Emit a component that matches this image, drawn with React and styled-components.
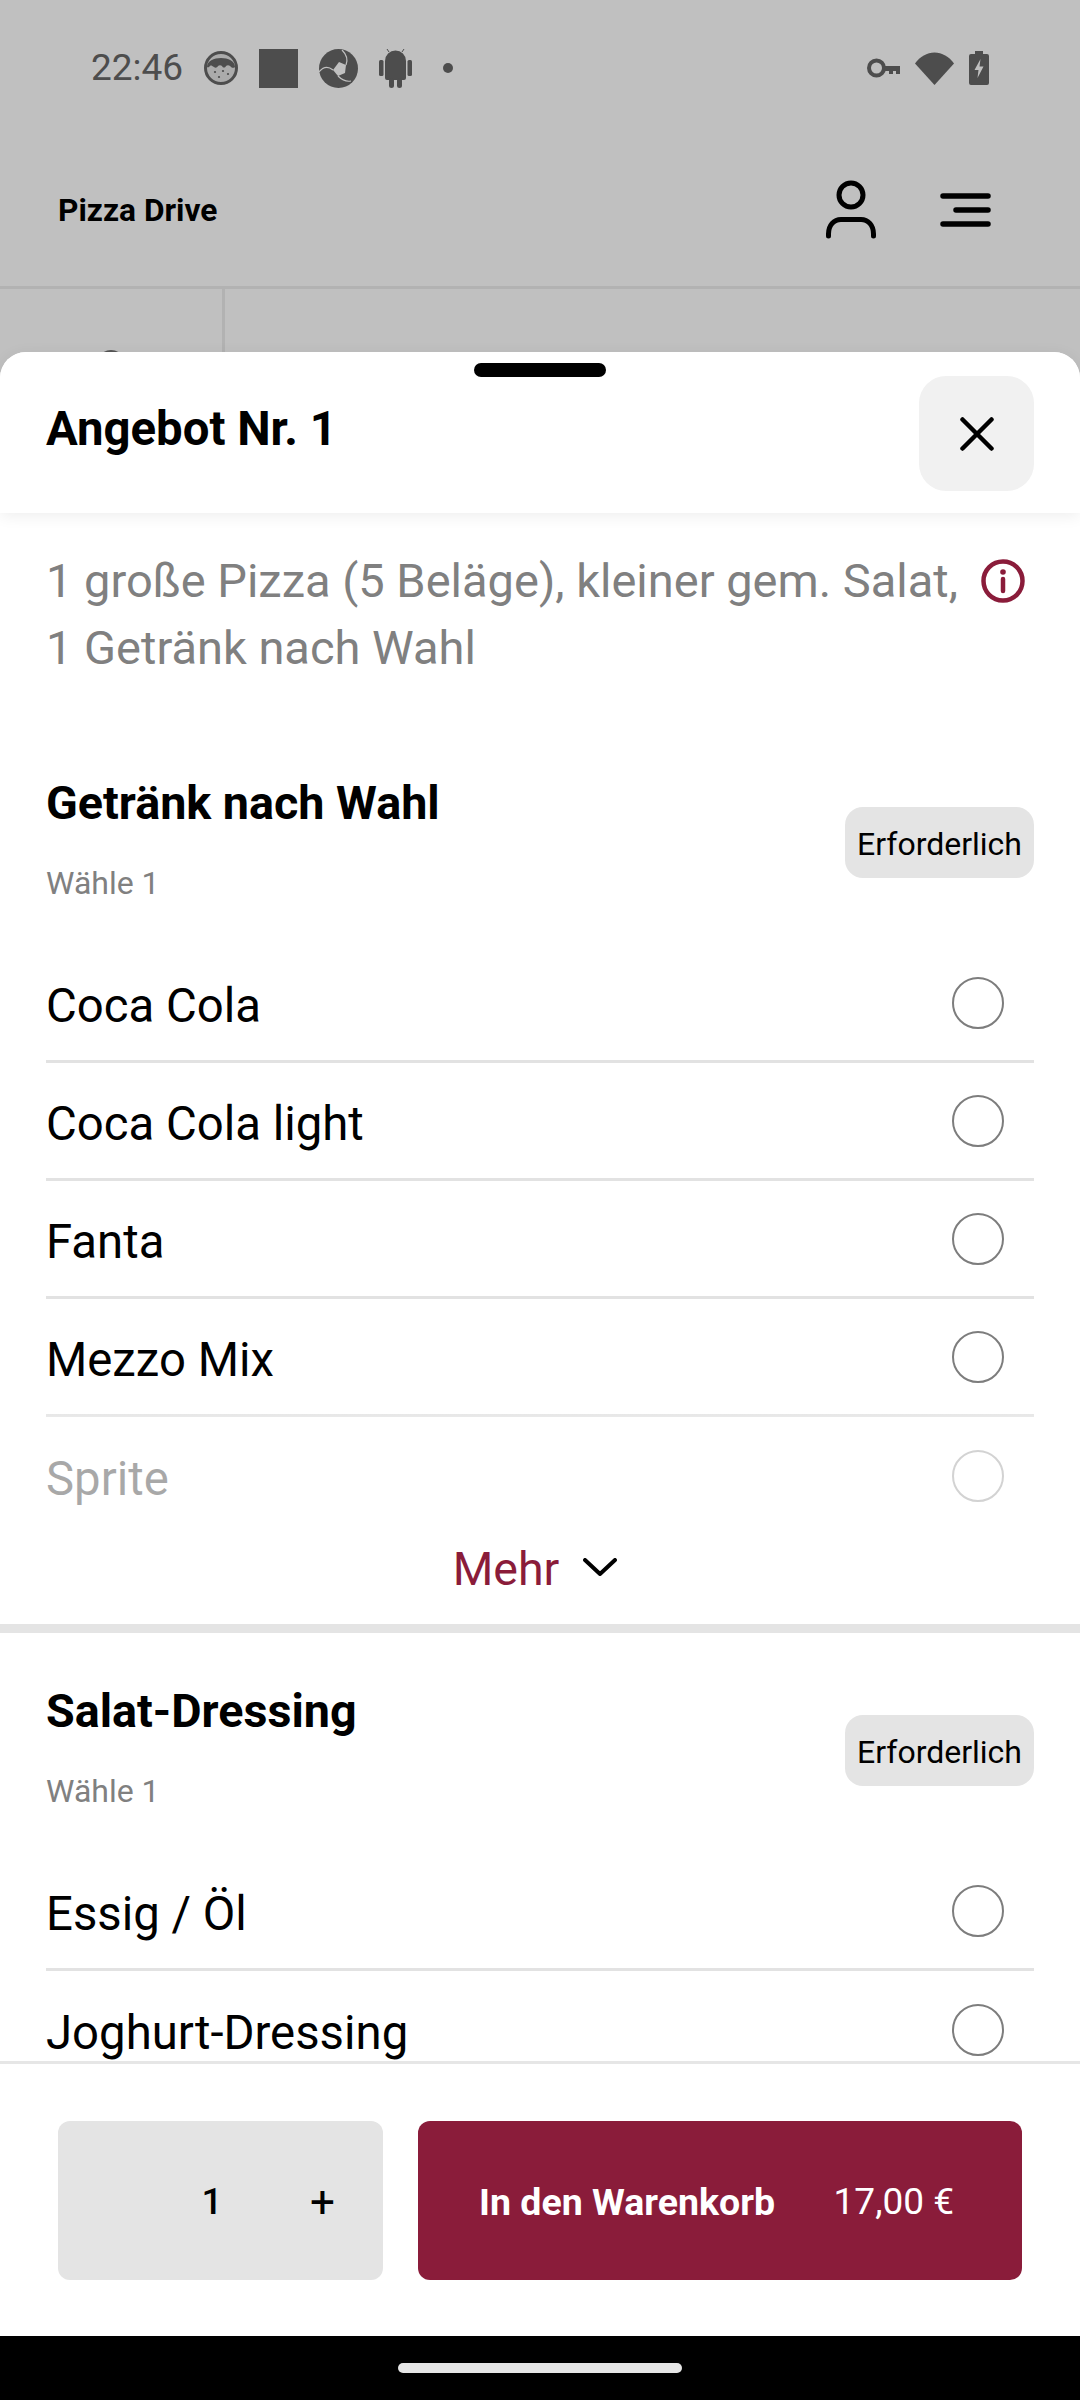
import React from "react";
import styled, { createGlobalStyle } from "styled-components";

const GlobalStyle = createGlobalStyle`
  html, body {
    margin: 0;
    padding: 0;
    background: #c0c0c0;
  }
  * {
    box-sizing: border-box;
  }
`;

const WINE = "#8a1c3a";
const STATUS = "#4d4d4d";
const BACK = "#c0c0c0";

const Screen = styled.div`
  width: 1080px;
  height: 2400px;
  display: flex;
  flex-direction: column;
  overflow: hidden;
  background: ${BACK};
  font-family: Roboto, "Liberation Sans", sans-serif;
  color: #000;
`;

const StatusBar = styled.div`
  height: 110px;
  flex: none;
  display: flex;
  align-items: center;
  justify-content: space-between;
  padding: 26px 91px 0 91px;
`;

const StatusGroup = styled.div`
  display: flex;
  align-items: center;
  gap: ${(p) => p.$gap}px;
`;

const Clock = styled.span`
  font-size: 37px;
  line-height: 40px;
  color: ${STATUS};
`;

const StatusDot = styled.span`
  width: 10px;
  height: 10px;
  margin-left: 10px;
  border-radius: 50%;
  background: ${STATUS};
`;

const StatusSquare = styled.span`
  width: 39px;
  height: 39px;
  background: ${STATUS};
`;

const AppHeader = styled.header`
  height: 179px;
  flex: none;
  display: flex;
  align-items: center;
  justify-content: space-between;
  padding: 24px 89px 0 58px;
  border-bottom: 3px solid #b2b2b2;
`;

const Brand = styled.span`
  font-size: 31.7px;
  font-weight: 700;
`;

const HeaderIcons = styled.div`
  display: flex;
  align-items: center;
  gap: 63px;
`;

const BackRow = styled.div`
  height: 63px;
  flex: none;
  display: flex;
`;

const BackColumn = styled.div`
  width: 225px;
  display: flex;
  align-items: flex-end;
  justify-content: center;
  overflow: hidden;
  border-right: 3px solid #b2b2b2;
`;

const BackThumb = styled.span`
  width: 28px;
  height: 28px;
  margin-bottom: -26px;
  border-radius: 50%;
  background: #555;
`;

const Sheet = styled.section`
  position: relative;
  flex: 1;
  min-height: 0;
  display: flex;
  flex-direction: column;
  background: #fff;
  border-radius: 26px 26px 0 0;
`;

const Handle = styled.span`
  position: absolute;
  top: 11px;
  left: 474px;
  width: 132px;
  height: 14px;
  border-radius: 7px;
  background: #000;
  z-index: 2;
`;

const SheetHeader = styled.div`
  position: relative;
  z-index: 1;
  height: 161px;
  flex: none;
  display: flex;
  align-items: flex-start;
  justify-content: space-between;
  padding: 24px 46px 0;
  background: #fff;
  border-radius: 26px 26px 0 0;
  box-shadow: 0 3px 16px rgba(0, 0, 0, 0.07);
`;

const SheetTitle = styled.h1`
  margin: 21px 0 0;
  font-size: 47.3px;
  line-height: 64px;
  font-weight: 700;
`;

const CloseButton = styled.button`
  width: 115px;
  height: 115px;
  display: flex;
  align-items: center;
  justify-content: center;
  padding: 0;
  border: 0;
  border-radius: 27px;
  background: #f1f1f1;
`;

const SheetBody = styled.div`
  flex: 1;
  min-height: 0;
  overflow: hidden;
`;

const Description = styled.div`
  display: flex;
  justify-content: space-between;
  padding: 34px 46px 0;
`;

const DescriptionText = styled.p`
  width: 930px;
  margin: 0;
  font-size: 47px;
  line-height: 67px;
  color: #808080;
`;

const InfoIcon = styled.svg`
  width: 44px;
  height: 44px;
  flex: none;
  margin: 12px 9px 0 0;
`;

const OptionGroup = styled.div`
  padding: ${(p) => p.$top}px 46px 0;
`;

const GroupHead = styled.div`
  display: flex;
  align-items: center;
  justify-content: space-between;
  margin-bottom: 42px;
`;

const GroupTitle = styled.h2`
  margin: 0;
  font-size: 46.7px;
  line-height: 56px;
  font-weight: 700;
`;

const GroupHint = styled.div`
  margin-top: 32px;
  font-size: 32px;
  line-height: 40px;
  color: #808080;
`;

const RequiredChip = styled.span`
  width: 189px;
  height: 71px;
  display: flex;
  align-items: center;
  justify-content: center;
  margin-top: 6px;
  padding-top: 4px;
  border-radius: 18px;
  background: #e4e4e4;
  font-size: 32px;
`;

const Collapse = styled.div`
  position: relative;
  max-height: 565px;
  overflow: hidden;
  &::after {
    content: "";
    position: absolute;
    left: 0;
    right: 0;
    bottom: 0;
    height: 105px;
    background: linear-gradient(rgba(255, 255, 255, 0), rgba(255, 255, 255, 0.66) 30%);
  }
`;

const OptionRow = styled.div`
  height: 118px;
  display: flex;
  align-items: center;
  justify-content: space-between;
  padding-right: 30px;
  border-bottom: 3px solid #e2e2e2;
  &:last-child {
    border-bottom: 0;
  }
`;

const OptionName = styled.span`
  position: relative;
  top: 3px;
  font-size: 47.3px;
`;

const Radio = styled.span`
  width: 52px;
  height: 52px;
  border: 2px solid #7d7d7d;
  border-radius: 50%;
`;

const MoreRow = styled.div`
  height: 114px;
  display: flex;
  align-items: center;
  justify-content: center;
  gap: 24px;
  padding-right: 10px;
  color: ${WINE};
  font-size: 46.5px;
`;

const MoreLabel = styled.span`
  position: relative;
  top: 2px;
`;

const SectionRule = styled.div`
  height: 9px;
  background: #e4e4e4;
`;

const Footer = styled.footer`
  height: 275px;
  flex: none;
  display: flex;
  gap: 35px;
  padding: 57px 58px 56px;
  background: #fff;
  border-top: 3px solid #e6e6e6;
`;

const Stepper = styled.div`
  width: 325px;
  display: grid;
  grid-template-columns: 108px 92px 129px;
  align-items: center;
  justify-items: center;
  padding-top: 2px;
  border-radius: 12px;
  background: #e4e4e4;
  font-size: 37px;
  font-weight: 500;
`;

const StepperPlus = styled.span`
  font-size: 44px;
  font-weight: 400;
`;

const CartButton = styled.button`
  flex: 1;
  display: flex;
  align-items: center;
  justify-content: space-between;
  padding: 2px 68px 0 61px;
  border: 0;
  border-radius: 12px;
  background: ${WINE};
  color: #fff;
  font-family: inherit;
  font-size: 37px;
`;

const CartLabel = styled.span`
  font-size: 37.5px;
  font-weight: 700;
`;

const NavBar = styled.div`
  height: 64px;
  flex: none;
  display: flex;
  align-items: flex-start;
  justify-content: center;
  padding-top: 27px;
  background: #000;
`;

const HomePill = styled.span`
  width: 284px;
  height: 10px;
  border-radius: 5px;
  background: #e6e6e6;
`;

const CookieIcon = () => (
  <svg width="34" height="34" viewBox="0 0 34 34">
    <circle cx="17" cy="17" r="15.5" fill="#ababab" stroke={STATUS} strokeWidth="3" />
    <path d="M3 16C3 4 31 4 31 16c-2 2-4 0-5-1-1-1-3-1-4 0-1 2-3 2-4 0-1-1-3-1-4 0-1 2-3 2-4 1-2-1-3-2-4-1-1 1-2 2-3 1z" fill={STATUS} />
    <g fill={STATUS}>
      <circle cx="11" cy="21" r="1.1" />
      <circle cx="19" cy="20" r="1.1" />
      <circle cx="24" cy="23" r="1.1" />
      <circle cx="15" cy="26" r="1.1" />
    </g>
  </svg>
);

const ShutterIcon = () => (
  <svg width="39" height="39" viewBox="0 0 39 39">
    <circle cx="19.5" cy="19.5" r="19.5" fill={STATUS} />
    <path d="M14 21l6-8 7 3-1 8-7 3z" fill={BACK} />
    <g stroke={BACK} strokeWidth="1.2" fill="none">
      <path d="M14 21C9 17 4 18 0 23" />
      <path d="M27 16c2-5 1-10-4-15" />
      <path d="M19 27c4 4 8 6 13 5" />
    </g>
  </svg>
);

const AndroidIcon = () => (
  <svg width="33" height="39" viewBox="0 0 33 39" fill={STATUS}>
    <path d="M6 12a10.5 10.5 0 0 1 21 0v17a2 2 0 0 1-2 2H8a2 2 0 0 1-2-2z" />
    <rect x="0" y="11" width="4.5" height="16" rx="1.5" />
    <rect x="28.5" y="11" width="4.5" height="16" rx="1.5" />
    <rect x="10" y="29" width="5" height="10" rx="2.5" />
    <rect x="18" y="29" width="5" height="10" rx="2.5" />
    <path d="M10 3L8 0M23 3l2-3" stroke={STATUS} strokeWidth="1" />
  </svg>
);

const KeyIcon = () => (
  <svg width="33" height="20" viewBox="0 0 33 20" fill="none">
    <circle cx="9.5" cy="10" r="7.5" stroke={STATUS} strokeWidth="4" />
    <path d="M17 8h16v8h-4v-3h-3v3h-4v-3h-5z" fill={STATUS} />
  </svg>
);

const WifiIcon = () => (
  <svg width="39" height="33" viewBox="0 0 39 33">
    <path d="M0 11.5C5 4.5 12 0.5 19.5 0.5S34 4.5 39 11.5L19.5 33z" fill={STATUS} />
  </svg>
);

const BatteryIcon = () => (
  <svg width="20" height="34" viewBox="0 0 20 34">
    <path d="M6 0h8v3h4a2 2 0 0 1 2 2v27a2 2 0 0 1-2 2H2a2 2 0 0 1-2-2V5a2 2 0 0 1 2-2h4z" fill={STATUS} />
    <path d="M11.5 8L5.5 19h4l-1 8 6-11.5h-4z" fill={BACK} />
  </svg>
);

const UserIcon = () => (
  <svg width="52" height="60" viewBox="0 0 52 60" fill="none" stroke="#000" strokeWidth="5" strokeLinecap="round">
    <circle cx="26" cy="15" r="12" />
    <path d="M3.5 56v-2C3.5 45 9 39.5 16 39.5h20C43 39.5 48.5 45 48.5 54v2" />
  </svg>
);

const MenuIcon = () => (
  <svg width="51" height="34" viewBox="0 0 51 34" fill="none" stroke="#000" strokeWidth="5.5" strokeLinecap="round">
    <path d="M3 3h45M16 17h32M3 31h45" />
  </svg>
);

const CloseIcon = () => (
  <svg width="34" height="34" viewBox="0 0 34 34" fill="none" stroke="#000" strokeWidth="4.5" strokeLinecap="round">
    <path d="M2.5 2.5l29 29M31.5 2.5l-29 29" />
  </svg>
);

const ChevronIcon = () => (
  <svg width="34" height="18" viewBox="0 0 34 18" fill="none" stroke="#000" strokeWidth="4" strokeLinecap="round" strokeLinejoin="round">
    <path d="M2 2l15 14L32 2" />
  </svg>
);

const Option = ({ name }) => (
  <OptionRow>
    <OptionName>{name}</OptionName>
    <Radio />
  </OptionRow>
);

const GroupHeading = ({ title }) => (
  <GroupHead>
    <div>
      <GroupTitle>{title}</GroupTitle>
      <GroupHint>Wähle 1</GroupHint>
    </div>
    <RequiredChip>Erforderlich</RequiredChip>
  </GroupHead>
);

const drinks = ["Coca Cola", "Coca Cola light", "Fanta", "Mezzo Mix", "Sprite"];
const dressings = ["Essig / Öl", "Joghurt-Dressing"];

export default function App() {
  return (
    <Screen>
      <GlobalStyle />
      <StatusBar>
        <StatusGroup $gap={21}>
          <Clock>22:46</Clock>
          <CookieIcon />
          <StatusSquare />
          <ShutterIcon />
          <AndroidIcon />
          <StatusDot />
        </StatusGroup>
        <StatusGroup $gap={15}>
          <KeyIcon />
          <WifiIcon />
          <BatteryIcon />
        </StatusGroup>
      </StatusBar>
      <AppHeader>
        <Brand>Pizza Drive</Brand>
        <HeaderIcons>
          <UserIcon />
          <MenuIcon />
        </HeaderIcons>
      </AppHeader>
      <BackRow>
        <BackColumn>
          <BackThumb />
        </BackColumn>
      </BackRow>
      <Sheet>
        <Handle />
        <SheetHeader>
          <SheetTitle>Angebot Nr. 1</SheetTitle>
          <CloseButton aria-label="Schließen">
            <CloseIcon />
          </CloseButton>
        </SheetHeader>
        <SheetBody>
          <Description>
            <DescriptionText>1 große Pizza (5 Beläge), kleiner gem. Salat, 1 Getränk nach Wahl</DescriptionText>
            <InfoIcon viewBox="0 0 44 44" fill="none">
              <circle cx="22" cy="22" r="19.5" stroke={WINE} strokeWidth="4.5" />
              <circle cx="22" cy="13" r="2.8" fill={WINE} />
              <path d="M22 20v12" stroke={WINE} strokeWidth="4.5" strokeLinecap="round" />
            </InfoIcon>
          </Description>
          <OptionGroup $top={94}>
            <GroupHeading title="Getränk nach Wahl" />
            <Collapse>
              {drinks.map((name) => (
                <Option key={name} name={name} />
              ))}
            </Collapse>
            <MoreRow>
              <MoreLabel>Mehr</MoreLabel>
              <ChevronIcon />
            </MoreRow>
          </OptionGroup>
          <SectionRule />
          <OptionGroup $top={50}>
            <GroupHeading title="Salat-Dressing" />
            {dressings.map((name) => (
              <Option key={name} name={name} />
            ))}
          </OptionGroup>
        </SheetBody>
        <Footer>
          <Stepper>
            <span />
            <span>1</span>
            <StepperPlus>+</StepperPlus>
          </Stepper>
          <CartButton>
            <CartLabel>In den Warenkorb</CartLabel>
            <span>17,00 €</span>
          </CartButton>
        </Footer>
        <NavBar>
          <HomePill />
        </NavBar>
      </Sheet>
    </Screen>
  );
}
